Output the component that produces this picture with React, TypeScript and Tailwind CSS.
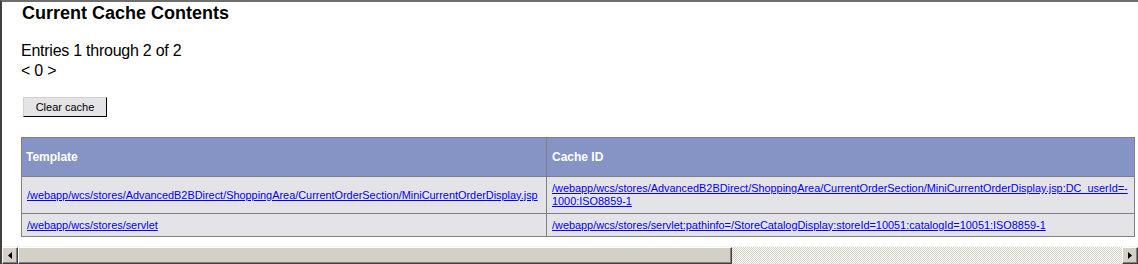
import * as React from 'react';

interface CacheEntry {
  template: string;
  cacheId: string[];
}

const entries: CacheEntry[] = [
  {
    template:
      '/webapp/wcs/stores/AdvancedB2BDirect/ShoppingArea/CurrentOrderSection/MiniCurrentOrderDisplay.jsp',
    cacheId: [
      '/webapp/wcs/stores/AdvancedB2BDirect/ShoppingArea/CurrentOrderSection/MiniCurrentOrderDisplay.jsp:DC_userId=-',
      '1000:ISO8859-1',
    ],
  },
  {
    template: '/webapp/wcs/stores/servlet',
    cacheId: [
      '/webapp/wcs/stores/servlet:pathinfo=/StoreCatalogDisplay:storeId=10051:catalogId=10051:ISO8859-1',
    ],
  },
];

/** Classic 3D scrollbar arrow button. */
function ScrollButton({ dir }: { dir: 'left' | 'right' }) {
  return (
    <div className="flex h-full w-[16px] shrink-0 items-center justify-center border border-t-[#ffffff] border-l-[#ffffff] border-b-[#404040] border-r-[#404040] bg-[#d4d0c8] shadow-[inset_-1px_-1px_0_#808080]">
      <svg width="4" height="7" viewBox="0 0 4 7">
        {dir === 'left' ? (
          <polygon points="4,0 4,7 0,3.5" fill="#000" />
        ) : (
          <polygon points="0,0 0,7 4,3.5" fill="#000" />
        )}
      </svg>
    </div>
  );
}

export default function App() {
  return (
    <div className="h-[264px] w-[1138px] overflow-hidden border-t-2 border-l-2 border-t-[#6e6e6e] border-l-[#404040] bg-white font-['Liberation_Sans',Arial,sans-serif] text-black">
      <div className="h-[244px] overflow-hidden pl-[19px]">
        <h1 className="ml-px text-[18px] leading-[22px] font-bold">
          Current Cache Contents
        </h1>
        <div className="mt-[17px] text-[16px] leading-[20px] tracking-[-0.25px]">
          <div>Entries 1 through 2 of 2</div>
          <div>&lt; 0 &gt;</div>
        </div>
        <button
          type="button"
          className="mt-[16px] ml-[2px] block h-[20px] w-[84px] border border-t-[#d4d0c8] border-l-[#d4d0c8] border-b-[#000] border-r-[#000] bg-[#e4e3e7] text-[11px] leading-[18px] text-black"
        >
          Clear cache
        </button>
        <table className="mt-[20px] w-[1114px] table-fixed border-collapse text-[10.9px] leading-[13px]">
          <colgroup>
            <col className="w-[525px]" />
            <col />
          </colgroup>
          <thead>
            <tr className="bg-[#8594c5]">
              <th className="h-[39px] border border-[#808080] px-[4px] text-left align-middle text-[12px] font-bold text-white">
                Template
              </th>
              <th className="h-[39px] border border-[#808080] px-[5px] text-left align-middle text-[12px] font-bold text-white">
                Cache ID
              </th>
            </tr>
          </thead>
          <tbody>
            {entries.map((e, i) => (
              <tr key={e.template} className="bg-[#e4e3e7]">
                <td
                  className={`${i === 0 ? 'h-[37px]' : 'h-[23px]'} border border-[#808080] px-[5px] align-middle`}
                >
                  <a href="#" className="text-[#0000ff] underline">
                    {e.template}
                  </a>
                </td>
                <td className="border border-[#808080] px-[5px] align-middle">
                  <a href="#" className="text-[#0000ff] underline">
                    {e.cacheId.map((line, j) => (
                      <React.Fragment key={line}>
                        {j > 0 && <br />}
                        {line}
                      </React.Fragment>
                    ))}
                  </a>
                </td>
              </tr>
            ))}
          </tbody>
        </table>
      </div>
      <div className="flex h-[18px] border-t border-t-[#f4f4f4] bg-[#d4d0c8]">
        <ScrollButton dir="left" />
        <div className="h-full w-[714px] shrink-0 border border-t-[#ffffff] border-l-[#ffffff] border-b-[#404040] border-r-[#404040] bg-[#d4d0c8] shadow-[inset_-1px_-1px_0_#808080]" />
        <div className="h-full flex-1 bg-[image:repeating-conic-gradient(#d4d0c8_0_25%,#ffffff_0_50%)] bg-[length:2px_2px]" />
        <ScrollButton dir="right" />
      </div>
    </div>
  );
}
